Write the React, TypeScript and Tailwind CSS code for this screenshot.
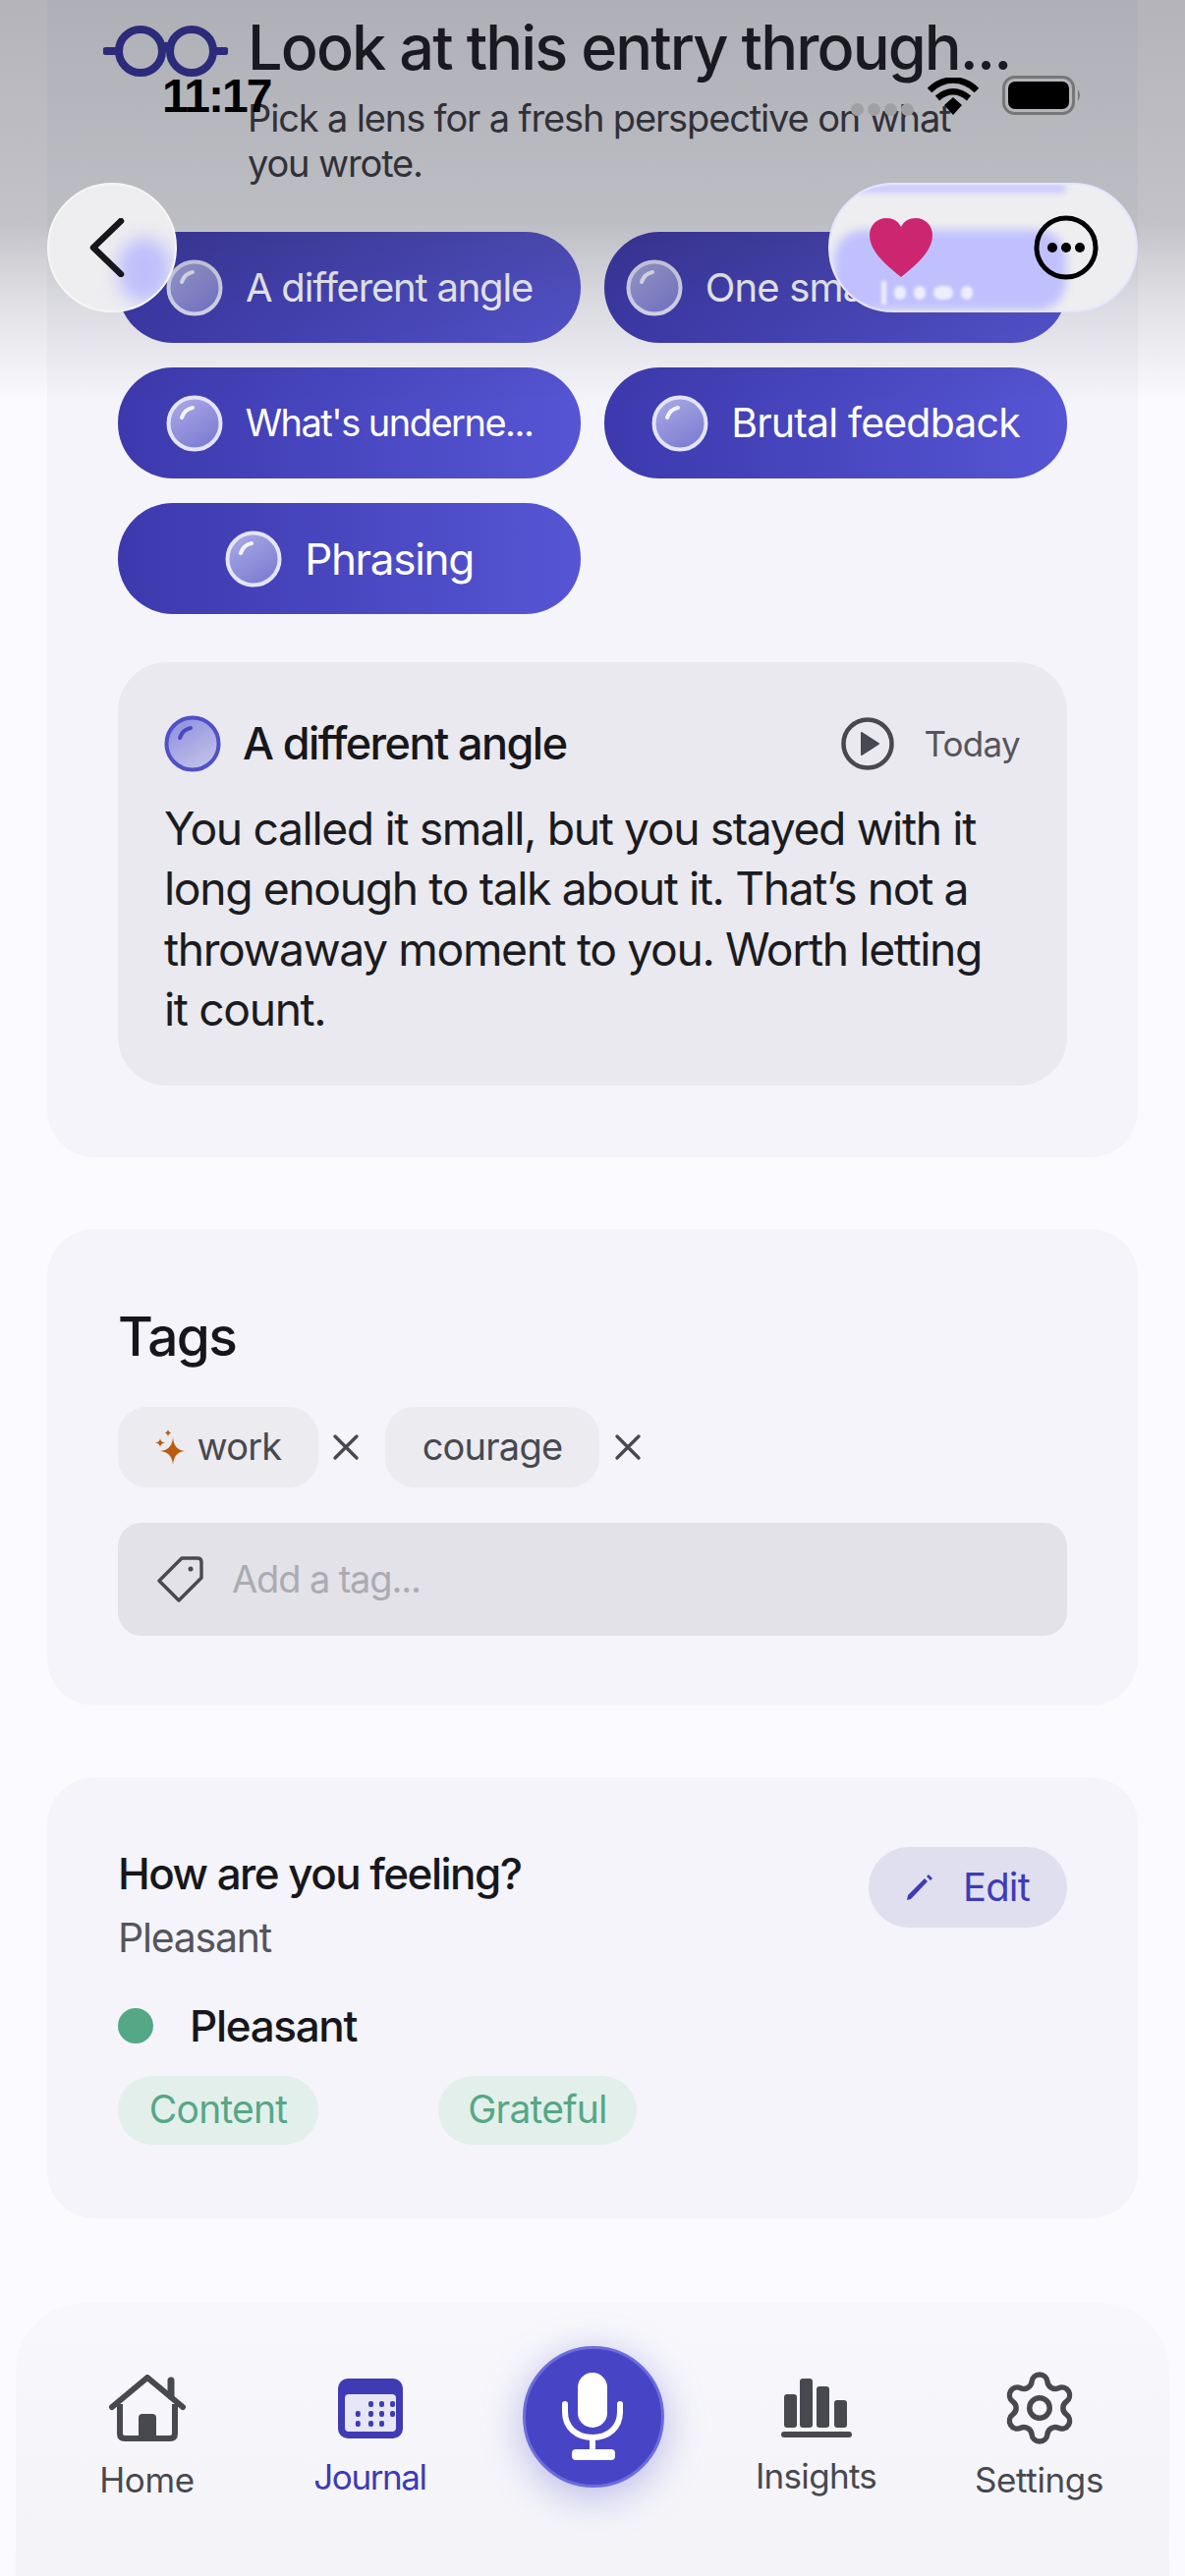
import React from "react";

const font = { fontFamily: "Inter, 'Noto Sans', sans-serif" };

function Orb({ solid = false }: { solid?: boolean }) {
  return (
    <svg width="58" height="58" viewBox="0 0 58 58" className="shrink-0">
      <defs>
        <linearGradient id={solid ? "orbS" : "orbP"} x1="0.2" y1="0" x2="0.8" y2="1">
          <stop offset="0" stopColor={solid ? "#8f8fe0" : "#a8a8e6"} />
          <stop offset="1" stopColor={solid ? "#c4c4ea" : "#7a7ad0"} />
        </linearGradient>
      </defs>
      <circle cx="29" cy="29" r="26.5" fill={`url(#${solid ? "orbS" : "orbP"})`} stroke={solid ? "#5050c8" : "#e4e4fa"} strokeWidth="4" />
      <path d="M16 23 C18 17 22 14 27 13" fill="none" stroke={solid ? "#4a48c0" : "#f4f4ff"} strokeWidth="4" strokeLinecap="round" />
    </svg>
  );
}

function Pill({ label, cls }: { label: string; cls: string }) {
  return (
    <div className="flex h-[113px] items-center justify-center gap-[23px] rounded-[56px] bg-gradient-to-r from-[#3d39ad] to-[#5655d4]">
      <Orb />
      <span className={`${cls} font-normal text-white`}>{label}</span>
    </div>
  );
}

function X({ size = 28 }: { size?: number }) {
  return (
    <svg width={size} height={size} viewBox="0 0 28 28" className="shrink-0">
      <path d="M3 3 L25 25 M25 3 L3 25" stroke="#48484f" strokeWidth="3.4" strokeLinecap="round" fill="none" />
    </svg>
  );
}

function HomeIcon() {
  return (
    <svg width="78" height="68" viewBox="0 0 78 68">
      <path d="M3 33 L39 3 L75 33" fill="none" stroke="#48484f" strokeWidth="6" strokeLinecap="round" strokeLinejoin="round" />
      <path d="M63 6 V22" stroke="#48484f" strokeWidth="7" strokeLinecap="round" />
      <path d="M11 30 V60 Q11 65 16 65 H62 Q67 65 67 60 V30" fill="none" stroke="#48484f" strokeWidth="6" />
      <path d="M30 65 V44 Q30 40 34 40 H44 Q48 40 48 44 V65 Z" fill="#48484f" />
    </svg>
  );
}

function CalendarIcon() {
  const dots: [number, number][] = [
    [30, 23], [40, 23], [50, 23],
    [18, 33], [30, 33], [40, 33], [50, 33],
    [18, 43], [30, 43], [40, 43],
  ];
  return (
    <svg width="66" height="61" viewBox="0 0 66 61">
      <rect width="66" height="61" rx="10" fill="#3f3bb5" />
      <rect x="7" y="16" width="52" height="38" rx="4" fill="#e6e6f6" />
      {dots.map(([x, y]) => (
        <rect key={`${x}-${y}`} x={x * 1.1 - 2} y={y} width="5" height="6" rx="2" fill="#3f3bb5" />
      ))}
    </svg>
  );
}

function BarsIcon() {
  return (
    <svg width="72" height="60" viewBox="0 0 72 60">
      <rect x="3" y="16" width="13" height="34" rx="3" fill="#48484f" />
      <rect x="19" y="0" width="13" height="50" rx="3" fill="#48484f" />
      <rect x="36" y="8" width="13" height="42" rx="3" fill="#48484f" />
      <rect x="54" y="22" width="13" height="28" rx="3" fill="#48484f" />
      <rect x="0" y="54" width="72" height="6" rx="3" fill="#48484f" />
    </svg>
  );
}

function GearIcon() {
  return (
    <svg width="82" height="82" viewBox="0 0 24 24" fill="none" stroke="#48484f" strokeWidth="1.6" strokeLinecap="round" strokeLinejoin="round" className="shrink-0">
      <path d="M9.671 4.136a2.34 2.34 0 0 1 4.659 0 2.34 2.34 0 0 0 3.319 1.915 2.34 2.34 0 0 1 2.33 4.033 2.34 2.34 0 0 0 0 3.831 2.34 2.34 0 0 1-2.33 4.033 2.34 2.34 0 0 0-3.319 1.915 2.34 2.34 0 0 1-4.659 0 2.34 2.34 0 0 0-3.32-1.915 2.34 2.34 0 0 1-2.33-4.033 2.34 2.34 0 0 0 0-3.831A2.34 2.34 0 0 1 6.35 6.051a2.34 2.34 0 0 0 3.319-1.915" />
      <circle cx="12" cy="12" r="3" />
    </svg>
  );
}

function Tab({ icon, label, cls }: { icon: React.ReactNode; label: string; cls: string }) {
  return (
    <div className="flex w-[227px] shrink-0 flex-col items-center">
      <div className="flex h-[70px] items-center justify-center">{icon}</div>
      <span className={`${cls} text-[35px] leading-[44px]`}>{label}</span>
    </div>
  );
}

export default function App() {
  return (
    <div style={font} className="relative h-[2622px] w-[1206px] overflow-hidden bg-[#fbfbff] text-[#17171b]">
      <div className="flex flex-col gap-[73px] px-[48px]">
        {/* Lens card */}
        <section className="flex flex-col rounded-b-[48px] bg-[#f4f4fa] px-[72px] pb-[73px] pt-[12px]">
          <div className="flex gap-[20px]">
            <svg width="127" height="54" viewBox="0 0 127 54" className="-ml-[15px] mt-[13px] shrink-0">
              <circle cx="38" cy="27" r="22" fill="none" stroke="#33309f" strokeWidth="8" />
              <circle cx="90" cy="27" r="22" fill="none" stroke="#33309f" strokeWidth="8" />
              <path d="M3 27 H14 M60 24 Q64 20 68 24 M112 27 H124" fill="none" stroke="#33309f" strokeWidth="8" strokeLinecap="round" />
            </svg>
            <div className="flex flex-col">
              <h1 className="whitespace-nowrap text-[63px] font-medium leading-[72px] tracking-[-0.03em]">Look at this entry through...</h1>
              <p className="mt-[13px] w-[730px] text-[38px] leading-[46px] tracking-[-0.03em] text-[#38383e]">Pick a lens for a fresh perspective on what you wrote.</p>
            </div>
          </div>
          <div className="mt-[47px] grid grid-cols-2 gap-x-[24px] gap-y-[25px]">
            <Pill label="A different angle" cls="text-[40px] tracking-[-0.03em]" />
            <Pill label="One small question" cls="text-[40px] tracking-[-0.02em]" />
            <Pill label="What's underne..." cls="text-[38px] tracking-[-0.04em]" />
            <Pill label="Brutal feedback" cls="text-[41px] tracking-[-0.02em]" />
            <Pill label="Phrasing" cls="text-[44px] tracking-[-0.03em]" />
          </div>
          <div className="mt-[49px] rounded-[50px] bg-[#e9e9ef] pb-[46px] pl-[47px] pr-[48px] pt-[49px]">
            <div className="flex items-center justify-between">
              <div className="flex items-center gap-[22px]">
                <Orb solid />
                <span className="text-[45px] font-medium tracking-[-0.035em]">A different angle</span>
              </div>
              <div className="flex items-center gap-[30px]">
                <svg width="54" height="54" viewBox="0 0 54 54">
                  <circle cx="27" cy="27" r="24.5" fill="none" stroke="#48484f" strokeWidth="4.5" />
                  <path d="M21 16 L38 27 L21 38 Z" fill="#48484f" stroke="#48484f" strokeWidth="2" strokeLinejoin="round" />
                </svg>
                <span className="text-[35px] tracking-[-0.02em] text-[#55555c]">Today</span>
              </div>
            </div>
            <p className="mt-[22px] w-[850px] text-[46.3px] leading-[61.5px] tracking-[-0.03em] text-[#1b1b20]">
              You called it small, but you stayed with it long enough to talk about it. That’s not a throwaway moment to you. Worth letting it count.
            </p>
          </div>
        </section>

        {/* Tags card */}
        <section className="flex h-[485px] flex-col rounded-[48px] bg-[#f4f4fa] px-[72px] pt-[74px]">
          <h2 className="text-[55px] font-medium leading-[70px] tracking-[-0.03em]">Tags</h2>
          <div className="mt-[37px] flex items-center">
            <div className="flex h-[82px] w-[204px] items-center justify-center gap-[13px] rounded-[30px] bg-[#ebebf0]">
              <svg width="30" height="36" viewBox="0 0 30 36" className="shrink-0">
                <path d="M18 8 Q19 21 30 22 Q19 23 18 36 Q17 23 5 22 Q17 21 18 8 Z" fill="#b85c10" />
                <path d="M5 9 Q5.5 13 10 13.5 Q5.5 14 5 18 Q4.5 14 0 13.5 Q4.5 13 5 9 Z" fill="#b85c10" />
                <path d="M13 0 Q13.3 3 16 3.5 Q13.3 4 13 7 Q12.7 4 10 3.5 Q12.7 3 13 0 Z" fill="#b85c10" />
              </svg>
              <span className="text-[38px] tracking-[-0.02em] text-[#48484f]">work</span>
            </div>
            <div className="ml-[14px] mr-[26px]"><X /></div>
            <div className="flex h-[82px] w-[218px] items-center justify-center rounded-[30px] bg-[#ebebf0]">
              <span className="text-[38px] tracking-[-0.02em] text-[#48484f]">courage</span>
            </div>
            <div className="ml-[15px]"><X /></div>
          </div>
          <div className="mt-[36px] flex h-[115px] items-center gap-[28px] rounded-[24px] bg-[#e2e2e8] pl-[40px]">
            <svg width="48" height="48" viewBox="0 0 48 48" fill="none" stroke="#48484f" strokeWidth="3.4" strokeLinejoin="round">
              <path d="M25 3 H41 Q45 3 45 7 V23 L22 46 L2 26 Z" />
              <circle cx="34" cy="14" r="2.5" fill="#48484f" stroke="none" />
            </svg>
            <span className="text-[38px] tracking-[-0.03em] text-[#ababb1]">Add a tag...</span>
          </div>
        </section>

        {/* Feeling card */}
        <section className="flex h-[449px] flex-col rounded-[48px] bg-[#f4f4fa] px-[72px] pt-[67px]">
          <div className="flex items-start justify-between">
            <div className="flex flex-col">
              <h2 className="text-[44px] font-medium leading-[62px] tracking-[-0.035em]">How are you feeling?</h2>
              <p className="text-[41px] leading-[68px] tracking-[-0.03em] text-[#55555c]">Pleasant</p>
            </div>
            <div className="mt-[4px] flex h-[82px] w-[202px] items-center justify-center gap-[30px] rounded-[41px] bg-[#dfdff0]">
              <svg width="28" height="28" viewBox="0 0 28 28">
                <path d="M1 27 L2 22 L19 5 L22 8 L5 26 Z M21 3 L23 1 L27 5 L25 7 Z" fill="#3f3bb5" />
              </svg>
              <span className="text-[40px] tracking-[-0.02em] text-[#3f3bb5]">Edit</span>
            </div>
          </div>
          <div className="mt-[27px] flex items-center gap-[37px]">
            <div className="h-[36px] w-[36px] rounded-full bg-[#54a886]" />
            <span className="text-[44px] font-medium leading-[58px] tracking-[-0.03em]">Pleasant</span>
          </div>
          <div className="mt-[22px] flex gap-[122px]">
            <div className="flex h-[70px] w-[204px] items-center justify-center rounded-[35px] bg-[#e3efeb] text-[39px] tracking-[-0.02em] text-[#54a886]">Content</div>
            <div className="flex h-[70px] w-[202px] items-center justify-center rounded-[35px] bg-[#e3efeb] text-[39px] tracking-[-0.02em] text-[#54a886]">Grateful</div>
          </div>
        </section>
      </div>

      {/* Bottom nav */}
      <nav className="absolute bottom-0 left-[16px] right-[16px] flex h-[278px] rounded-t-[70px] bg-gradient-to-b from-[#f8f8fc] to-[#f3f3f8] pl-[20px] pt-[72px]">
        <Tab icon={<HomeIcon />} label="Home" cls="mt-[16px] tracking-[-0.01em] text-[#48484f]" />
        <Tab icon={<CalendarIcon />} label="Journal" cls="mt-[13px] tracking-[-0.04em] text-[#3f3bb5]" />
        <div className="flex w-[227px] shrink-0 justify-center">
          <div className="flex h-[144px] w-[144px] -translate-y-[28px] items-center justify-center rounded-full border-[3px] border-[#6c6cdc] bg-[#4745c6] shadow-[0_8px_40px_rgba(70,68,200,0.35)]">
            <svg width="64" height="90" viewBox="0 0 64 90">
              <rect x="16" y="0" width="30" height="56" rx="15" fill="#fff" />
              <path d="M3 32 V40 C3 56 15 66 31 66 C47 66 59 56 59 40 V32" fill="none" stroke="#fff" strokeWidth="6" strokeLinecap="round" />
              <path d="M31 66 V82" stroke="#fff" strokeWidth="6" />
              <rect x="10" y="78" width="44" height="11" rx="4" fill="#fff" />
            </svg>
          </div>
        </div>
        <Tab icon={<BarsIcon />} label="Insights" cls="mt-[12px] tracking-[-0.02em] text-[#48484f]" />
        <Tab icon={<GearIcon />} label="Settings" cls="mt-[16px] tracking-[-0.01em] text-[#48484f]" />
      </nav>

      {/* Top scrim */}
      <div className="pointer-events-none absolute inset-x-0 top-0 h-[410px] bg-[linear-gradient(to_bottom,rgba(30,30,40,0.32)_0%,rgba(30,30,40,0.26)_55%,rgba(30,30,40,0.12)_75%,rgba(30,30,40,0)_100%)]" />

      {/* Status bar */}
      <div className="absolute left-[165px] top-[72px] text-[48px] font-semibold leading-[52px] tracking-[-0.04em] text-black" style={{ fontFamily: "'Liberation Sans', sans-serif" }}>11:17</div>
      <div className="absolute left-[866px] top-[105px] flex gap-[4px]">
        <div className="h-[13px] w-[13px] rounded-full bg-[#a0a0a4]" />
        <div className="h-[13px] w-[13px] rounded-full bg-[#a0a0a4]" />
        <div className="h-[13px] w-[13px] rounded-full bg-[#a0a0a4]" />
        <div className="h-[13px] w-[13px] rounded-full bg-[#a0a0a4]" />
      </div>
      <svg width="52" height="38" viewBox="0 0 52 38" className="absolute left-[944px] top-[79px]">
        <path d="M2 13 C16 -1 36 -1 50 13" fill="none" stroke="#000" strokeWidth="6.5" />
        <path d="M10 21 C20 12 32 12 42 21" fill="none" stroke="#000" strokeWidth="6.5" />
        <path d="M17 28 L26 20 L35 28 L26 38 Z" fill="#000" />
      </svg>
      <svg width="82" height="40" viewBox="0 0 82 40" className="absolute left-[1020px] top-[77px]">
        <rect x="1.5" y="1.5" width="71" height="37" rx="11" fill="none" stroke="#77777a" strokeWidth="3" />
        <rect x="6" y="6" width="62" height="28" rx="7" fill="#000" />
        <path d="M77 14 Q81 20 77 26 Z" fill="#77777a" />
      </svg>

      {/* Back button */}
      <div className="absolute left-[48px] top-[186px] flex h-[132px] w-[132px] items-center justify-center overflow-hidden rounded-full border-2 border-[#f6f6f8] bg-[#eeeef0]">
        <div className="absolute left-[70px] top-[54px] h-[66px] w-[54px] rounded-full bg-[#bfbffc] blur-[9px]" />
        <svg width="36" height="60" viewBox="0 0 36 60" className="relative -ml-[10px]">
          <path d="M32 3 L4 30 L32 57" fill="none" stroke="#17171b" strokeWidth="6.5" strokeLinecap="round" strokeLinejoin="round" />
        </svg>
      </div>

      {/* Actions pill */}
      <div className="absolute left-[843px] top-[186px] flex h-[132px] w-[315px] items-center justify-between overflow-hidden rounded-[66px] border-2 border-[#e4e4ff] bg-[#eeeef0] pl-[40px] pr-[38px]">
        <div className="absolute left-[4px] top-[46px] h-[82px] w-[236px] rounded-[30px] bg-[#c0c0ff] blur-[5px]" />
        <div className="absolute left-[20px] top-[0px] h-[8px] w-[220px] rounded-full bg-[#c6c6ff] blur-[3px]" />
        <div className="absolute left-[52px] top-[98px] flex items-center gap-[8px]">
          <div className="h-[24px] w-[5px] bg-[#ededff] blur-[1.5px]" />
          <div className="h-[14px] w-[12px] rounded-full bg-[#ededff] blur-[1.5px]" />
          <div className="h-[14px] w-[12px] rounded-full bg-[#ededff] blur-[1.5px]" />
          <div className="h-[14px] w-[20px] rounded-full bg-[#ededff] blur-[1.5px]" />
          <div className="h-[14px] w-[12px] rounded-full bg-[#ededff] blur-[1.5px]" />
        </div>
        <svg width="64" height="60" viewBox="0 0 64 60" className="relative">
          <path d="M32 60 C12 44 0 32 0 17 C0 7 8 0 17 0 C24 0 29 3 32 9 C35 3 40 0 47 0 C56 0 64 7 64 17 C64 32 52 44 32 60 Z" fill="#cd2670" />
        </svg>
        <svg width="66" height="66" viewBox="0 0 66 66" className="relative">
          <circle cx="33" cy="33" r="30" fill="none" stroke="#000" strokeWidth="5" />
          <circle cx="19" cy="33" r="5" fill="#000" />
          <circle cx="33" cy="33" r="5" fill="#000" />
          <circle cx="47" cy="33" r="5" fill="#000" />
        </svg>
      </div>
    </div>
  );
}
